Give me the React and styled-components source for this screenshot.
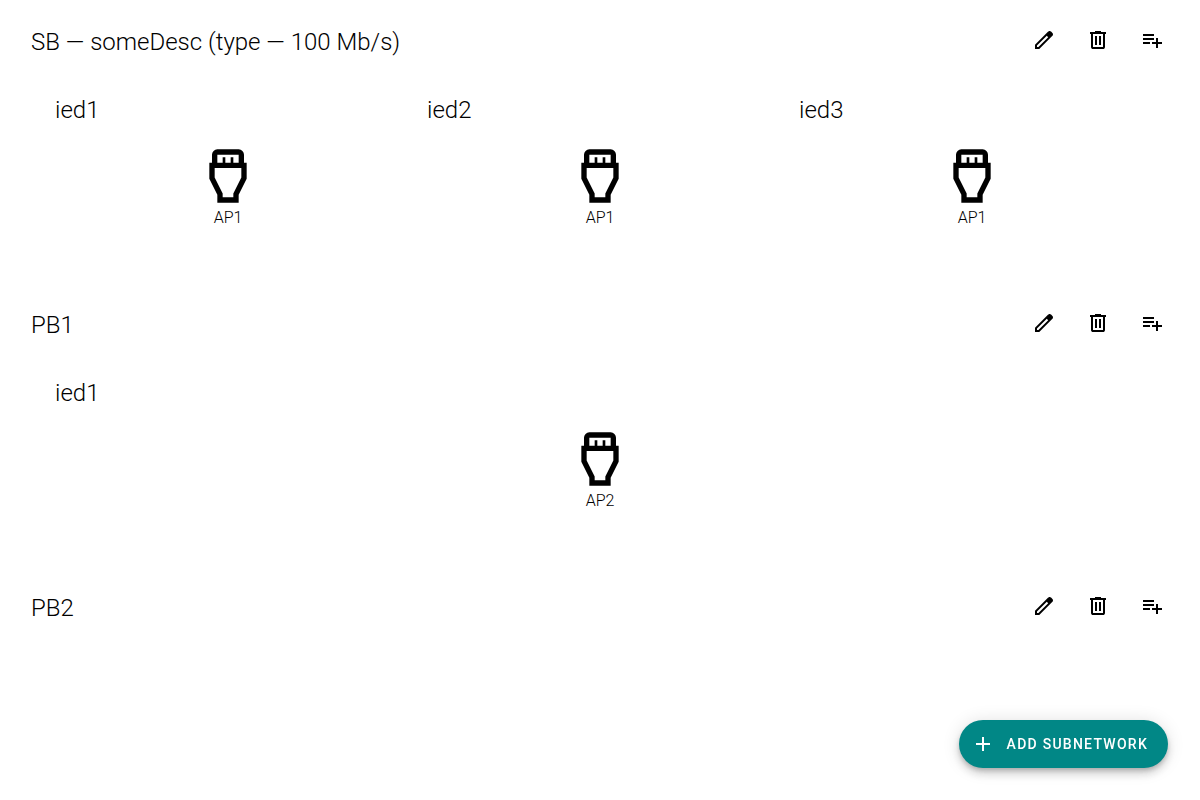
import React from 'react';
import styled, { createGlobalStyle } from 'styled-components';

const GlobalStyle = createGlobalStyle`
  *, *::before, *::after { box-sizing: border-box; }
  body {
    margin: 0;
    background: #fff;
    color: #000;
    font-family: Roboto, "Liberation Sans", sans-serif;
    font-weight: 300;
  }
`;

const Page = styled.main`
  display: flex;
  flex-direction: column;
  gap: 48px;
  padding: 16px 24px;
`;

const Subnetwork = styled.section`
  display: flex;
  flex-direction: column;
  gap: 16px;
`;

const SubnetworkHeader = styled.header`
  display: flex;
  justify-content: space-between;
  height: 52px;
`;

const Title = styled.h1`
  margin: 0;
  padding: 2px 7px 0;
  font-size: 24px;
  font-weight: 300;
  line-height: 48px;
  white-space: nowrap;
  overflow: hidden;
  text-overflow: ellipsis;
`;

const Actions = styled.nav`
  display: flex;
  gap: 6px;
`;

const IconButton = styled.button`
  display: flex;
  align-items: center;
  justify-content: center;
  width: 48px;
  height: 48px;
  padding: 0;
  border: 0;
  border-radius: 50%;
  background: transparent;
  color: inherit;
  cursor: pointer;
  &:hover { background: rgba(0, 0, 0, 0.04); }
`;

const IedGrid = styled.div`
  display: grid;
  grid-template-columns: repeat(auto-fit, minmax(316px, 1fr));
  gap: 12px;
  padding: 0 24px;
`;

const Ied = styled.article`
  display: flex;
  flex-direction: column;
  gap: 10px;
  height: 167px;
`;

const IedName = styled.h2`
  margin: 0;
  padding: 2px 7px 0;
  font-size: 24px;
  font-weight: 300;
  line-height: 48px;
`;

const AccessPoint = styled.figure`
  display: flex;
  flex-direction: column;
  align-items: center;
  margin: 0;
`;

const AccessPointName = styled.figcaption`
  font-size: 16px;
  line-height: 20px;
`;

const AddButton = styled.button`
  position: fixed;
  right: 32px;
  bottom: 32px;
  display: flex;
  align-items: center;
  gap: 12px;
  height: 48px;
  padding: 0 20px 0 12px;
  border: 0;
  border-radius: 24px;
  background: #018786;
  color: #fff;
  font-family: inherit;
  font-size: 14px;
  font-weight: 500;
  letter-spacing: 0.09em;
  text-transform: uppercase;
  cursor: pointer;
  box-shadow:
    0 3px 5px -1px rgba(0, 0, 0, 0.2),
    0 6px 10px 0 rgba(0, 0, 0, 0.14),
    0 1px 18px 0 rgba(0, 0, 0, 0.12);
`;

const paths = {
  edit: 'M5 19h1.425L16.2 9.225 14.775 7.8 5 17.575V19Zm-2 2v-4.25L16.2 3.575c.2-.183.42-.325.663-.425.241-.1.495-.15.762-.15s.525.05.775.15c.25.1.467.25.65.45L20.425 5c.2.183.346.4.437.65a2.166 2.166 0 0 1 0 1.512 1.874 1.874 0 0 1-.437.663L7.25 21H3Z',
  delete: 'M7 21q-.825 0-1.412-.587Q5 19.825 5 19V6H4V4h5V3h6v1h5v2h-1v13q0 .825-.587 1.413Q17.825 21 17 21ZM17 6H7v13h10ZM9 17h2V8H9Zm4 0h2V8h-2Z',
  playlistAdd: 'M3 16v-2h7v2Zm0-4v-2h11v2Zm0-4V6h11v2Zm13 12v-4h-4v-2h4v-4h2v4h4v2h-4v4Z',
  port: 'M8 22v-3l-3-6V7h1V4q0-.825.588-1.413Q7.175 2 8 2h8q.825 0 1.413.587Q18 3.175 18 4v3h1v6l-3 6v3ZM8 7h2V5h1v2h2V5h1v2h2V4H8Zm2 13h4v-1.475l3-6V9H7v3.525l3 6Z',
  add: 'M11 19v-6H5v-2h6V5h2v6h6v2h-6v6Z',
};

function Icon({ name, size = 24 }) {
  return (
    <svg width={size} height={size} viewBox="0 0 24 24" fill="currentColor" fillRule="evenodd" aria-hidden="true">
      <path d={paths[name]} />
    </svg>
  );
}

const subnetworks = [
  {
    title: 'SB — someDesc (type — 100 Mb/s)',
    ieds: [
      { name: 'ied1', ap: 'AP1' },
      { name: 'ied2', ap: 'AP1' },
      { name: 'ied3', ap: 'AP1' },
    ],
  },
  { title: 'PB1', ieds: [{ name: 'ied1', ap: 'AP2' }] },
  { title: 'PB2', ieds: [] },
];

export default function App() {
  return (
    <>
      <GlobalStyle />
      <Page>
        {subnetworks.map(({ title, ieds }) => (
          <Subnetwork key={title}>
            <SubnetworkHeader>
              <Title>{title}</Title>
              <Actions>
                <IconButton aria-label="Edit"><Icon name="edit" /></IconButton>
                <IconButton aria-label="Delete"><Icon name="delete" /></IconButton>
                <IconButton aria-label="Add connected access point"><Icon name="playlistAdd" /></IconButton>
              </Actions>
            </SubnetworkHeader>
            {ieds.length > 0 && (
              <IedGrid>
                {ieds.map(({ name, ap }) => (
                  <Ied key={name}>
                    <IedName>{name}</IedName>
                    <AccessPoint>
                      <Icon name="port" size={64} />
                      <AccessPointName>{ap}</AccessPointName>
                    </AccessPoint>
                  </Ied>
                ))}
              </IedGrid>
            )}
          </Subnetwork>
        ))}
      </Page>
      <AddButton>
        <Icon name="add" />
        Add subnetwork
      </AddButton>
    </>
  );
}
